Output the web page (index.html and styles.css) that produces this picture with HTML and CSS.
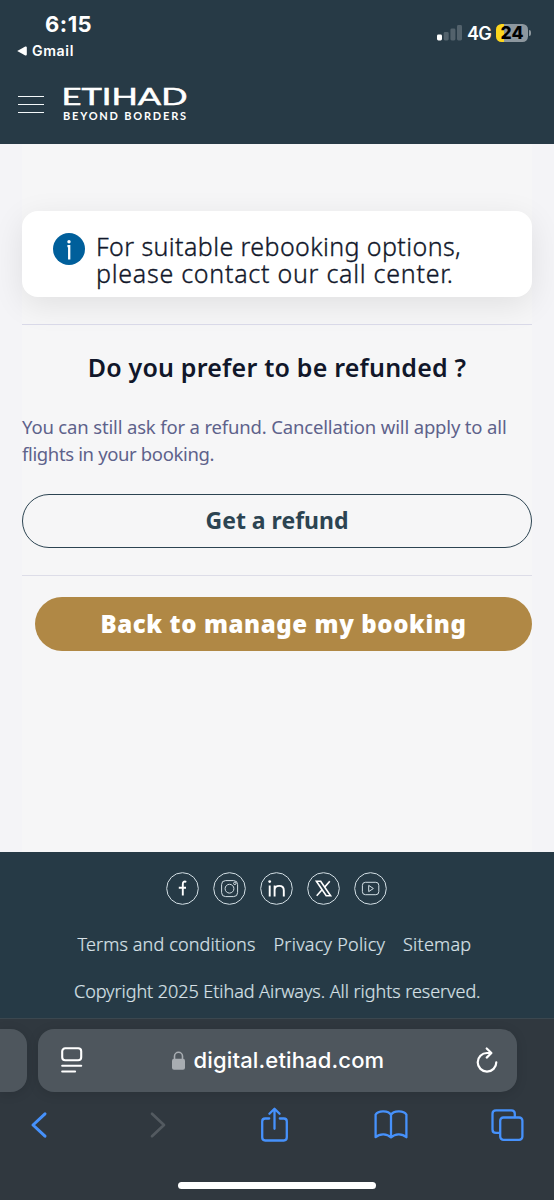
FILE: index.html
```html
<!DOCTYPE html>
<html lang="en">
<head>
<meta charset="utf-8">
<title>Etihad – Manage booking</title>
<link rel="stylesheet" href="styles.css">
</head>
<body>
<div class="screen">
  <header class="top">
    <div class="status">
      <div class="status-left">
        <div class="clock">6:15</div>
        <div class="back-app">
          <svg width="10" height="10" viewBox="0 0 10 10"><path d="M0.2 5 8.3 0.5Q9.8 0.1 9.8 1.4V8.6Q9.8 9.9 8.3 9.5Z" fill="#fff"/></svg>
          <span>Gmail</span>
        </div>
      </div>
      <div class="status-right">
        <svg width="25" height="16" viewBox="0 0 25 16"><rect x="0" y="9.5" width="5" height="6" rx="1.4" fill="#fff"/><g fill="#53626c"><rect x="6.7" y="7" width="5" height="8.5" rx="1.4"/><rect x="13.4" y="3.5" width="5" height="12" rx="1.4"/><rect x="20" y="0" width="5" height="15.5" rx="1.4"/></g></svg>
        <span class="network">4G</span>
        <span class="battery">24</span><span class="battery-tip"></span>
      </div>
    </div>
    <div class="brand-bar">
      <div class="menu"><i></i><i></i><i></i></div>
      <div class="logo">
        <svg width="126" height="20" viewBox="0 0 126 20"><text class="wordmark" x="-1.5" y="18" textLength="126" lengthAdjust="spacingAndGlyphs">ETIHAD</text></svg>
        <div class="tagline">BEYOND BORDERS</div>
      </div>
    </div>
  </header>

  <main class="page">
    <div class="content">
      <section class="notice">
        <svg class="info" width="32" height="32" viewBox="0 0 32 32"><circle cx="16" cy="16" r="16" fill="#005f9b"/><circle cx="16" cy="8.8" r="1.7" fill="#fff"/><path d="M14.4 13.2H16.2V26.6" fill="none" stroke="#fff" stroke-width="2.3"/></svg>
        <div class="notice-text"><p class="n1">For suitable rebooking options,</p><p class="n2">please contact our call center.</p></div>
      </section>
      <section class="refund">
        <h1>Do you prefer to be refunded ?</h1>
        <div class="hint"><p class="hint-a">You can still ask for a refund. Cancellation will apply to all</p><p class="hint-b">flights in your booking.</p></div>
        <button class="btn outline">Get a refund</button>
      </section>
      <button class="btn solid">Back to manage my booking</button>
    </div>
  </main>

  <footer class="footer">
    <div class="social">
      <svg viewBox="0 0 33 33"><circle cx="16.5" cy="16.5" r="15.8"/><path class="bold" d="M20.3 9.8Q16.8 8.8 16.8 12.2V23.5M12.8 15.8H20"/></svg>
      <svg viewBox="0 0 33 33"><circle cx="16.5" cy="16.5" r="15.8"/><rect x="8.6" y="8.6" width="16" height="16" rx="4"/><circle cx="16.5" cy="16.7" r="4.4"/><circle cx="21.8" cy="11.4" r="1.2"/></svg>
      <svg viewBox="0 0 33 33"><circle cx="16.5" cy="16.5" r="15.8"/><path class="bold" d="M9.7 13.4V24.4M14.6 24.4V13.4M14.6 18Q14.8 13.9 19.2 13.9 23.8 13.9 23.8 18.4V24.4"/><circle class="dot" cx="9.7" cy="9.6" r="1.4"/></svg>
      <svg viewBox="0 0 33 33"><circle cx="16.5" cy="16.5" r="15.8"/><path class="xmark" d="M9.4 9.2H13.7L23.6 23.7H19.2ZM22.8 9.2 17.2 15.6M9.7 23.7 15.5 17.2"/></svg>
      <svg viewBox="0 0 33 33"><circle cx="16.5" cy="16.5" r="15.8"/><rect x="8.4" y="10.3" width="16.4" height="12.4" rx="3"/><path d="M14.7 13.4 19.4 16.5 14.7 19.6Z"/></svg>
    </div>
    <nav class="links"><a class="l1">Terms and conditions</a><a class="l2">Privacy Policy</a><a class="l3">Sitemap</a></nav>
    <div class="copyright">Copyright 2025 Etihad Airways. All rights reserved.</div>
  </footer>

  <div class="browser">
    <div class="tabs">
      <div class="tab-edge"></div>
      <div class="address">
        <svg width="22" height="26" viewBox="0 0 22 26" fill="none" stroke="#fff" stroke-width="2.1" stroke-linecap="round"><rect x="1.2" y="1.3" width="19" height="12" rx="3"/><path d="M1.2 18.7H20.2M1.2 24.5H14.1"/></svg>
        <div class="host">
          <svg width="13" height="19" viewBox="0 0 13 19"><path d="M2.5 8.5V5.3a4 4 0 0 1 8 0V8.5" fill="none" stroke="#a8adb2" stroke-width="1.6"/><rect width="13" height="11" y="7.7" rx="2" fill="#a8adb2"/></svg>
          <span>digital.etihad.com</span>
        </div>
        <svg width="22" height="27" viewBox="0 0 22 27" fill="none" stroke="#fff" stroke-width="2.2" stroke-linecap="round" stroke-linejoin="round"><path d="M14.6 6H11A9.3 9.3 0 1 0 20.3 15.3M10.7 1.5 15.4 6 10.7 10.6"/></svg>
      </div>
    </div>
    <div class="tools">
      <svg width="16" height="26" viewBox="0 0 16 26" stroke="#4691fb" stroke-width="3"><path d="M14 1.8 2 13 14 24.2"/></svg>
      <svg class="forward" width="16" height="26" viewBox="0 0 16 26" stroke="#535a60" stroke-width="2.7"><path d="M2 1.8 14 13 2 24.2"/></svg>
      <svg class="share" width="27" height="34" viewBox="0 0 27 34" stroke="#4691fb" stroke-width="2.3"><path d="M8.2 11.5H4.2Q1.2 11.5 1.2 14.5V30.3Q1.2 33.5 4.2 33.5H22.8Q25.8 33.5 25.8 30.3V14.5Q25.8 11.5 22.8 11.5H18.8M13.5 21.8V1.8M8.4 6.8 13.5 1.7 18.6 6.8"/></svg>
      <svg class="book" width="34" height="29" viewBox="0 0 34 29" stroke="#4691fb" stroke-width="2.3"><path d="M17 4.8C14.5 0.6 4.5 0.1 1.6 4.6V27.2C6 23.2 13 23.6 17 27.4 21 23.6 28 23.2 32.4 27.2V4.6C29.5 0.1 19.5 0.6 17 4.8ZM17 4.8V27"/></svg>
      <svg class="windows" width="33" height="32" viewBox="0 0 33 32" stroke="#4691fb" stroke-width="2.3"><rect x="9.2" y="8.5" width="22.2" height="22.3" rx="3.2"/><path d="M8.7 23.9H5Q1.5 23.9 1.5 20.4V4.8Q1.5 1.3 5 1.3H20.3Q23.8 1.3 23.8 4.8V8"/></svg>
    </div>
    <div class="home-bar"></div>
  </div>
</div>
</body>
</html>
```
FILE: styles.css
```css
* { box-sizing: border-box; }
body { margin: 0; font-family: "Noto Sans", sans-serif; }
p { margin: 0; }
svg { display: block; flex: none; overflow: visible; }
.screen { width: 554px; height: 1200px; display: flex; flex-direction: column; overflow: hidden; white-space: nowrap; }

.top { height: 144px; background: #273a46; color: #fff; }
.status { height: 82px; display: flex; justify-content: space-between; font-family: Inter, sans-serif; }
.status-left { padding-left: 17px; }
.clock { padding: 12px 0 0 28px; font-size: 22px; line-height: 25px; font-weight: 700; letter-spacing: 0.5px; }
.back-app { display: flex; align-items: center; gap: 5px; height: 27px; font-size: 14.2px; font-weight: 600; letter-spacing: 0.6px; }
.status-right { display: flex; align-items: center; height: 66px; padding-right: 23px; }
.network { margin-left: 5px; width: 29px; font-size: 18px; font-weight: 600; letter-spacing: -0.7px; }
.battery { width: 32px; height: 18px; border-radius: 5.5px; background: linear-gradient(90deg, #fdd61d 8px, #8d979e 8px); color: #000; font-size: 17.5px; line-height: 18px; font-weight: 800; text-align: center; }
.battery-tip { width: 2px; height: 6px; margin-left: 1px; border-radius: 0 3px 3px 0; background: #8d979e; }
.brand-bar { display: flex; padding-left: 18px; }
.menu { width: 26px; padding-top: 13.5px; display: grid; gap: 7px; align-content: start; }
.menu i { height: 1.2px; background: #f4f8fa; }
.logo { margin-left: 19px; padding-top: 4.5px; }
.wordmark { font-family: Lato, sans-serif; font-size: 22.5px; font-weight: 400; fill: #fff; stroke: #fff; stroke-width: 0.5px; }
.tagline { margin-top: 3.5px; font-family: Lato, sans-serif; font-size: 11px; line-height: 12px; font-weight: 700; letter-spacing: 1.8px; }

.page { height: 708px; background: #f4f4f7; padding: 0 22px; }
.content { height: 100%; padding-top: 67px; background: #f6f6f7; display: flex; flex-direction: column; }
.notice { height: 86px; border-radius: 16px; background: #fff; box-shadow: 0 8px 32px rgba(0,0,0,.09); display: flex; padding: 21.5px 0 0 31px; color: #11172a; }
.notice-text { margin: 0 0 0 11px; font-size: 25px; line-height: 27px; font-weight: 300; -webkit-text-stroke: 0.35px #11172a; }
.n1 { letter-spacing: 0.41px; }
.n2 { letter-spacing: 0.74px; }
.refund { margin-top: 27px; height: 252px; border-top: 1px solid #d9d9e8; border-bottom: 1px solid #dddde8; display: flex; flex-direction: column; }
h1 { margin: 24px 0 0; color: #11172a; font-size: 25px; line-height: 36px; font-weight: 600; text-align: center; letter-spacing: 0.2px; }
.hint { margin: 28px 0 0; color: #5e628b; font-size: 18.5px; line-height: 27px; }
.hint-a { letter-spacing: -0.16px; }
.hint-b { letter-spacing: -0.36px; }
.btn { font-family: "Noto Sans", sans-serif; font-size: 23px; padding: 0 0 2px; border-radius: 27px; height: 54px; }
.outline { margin-top: 27px; flex: none; border: 1.5px solid #2c4452; background: transparent; color: #2c4452; font-weight: 700; }
.solid { margin: 21px 0 0 13px; border: 0; background: #b08845; color: #fff; font-size: 24px; font-weight: 900; letter-spacing: 0.6px; }

.footer { height: 166px; background: #263a46; color: #d6e0e6; font-weight: 300; }
.social { display: flex; justify-content: center; gap: 14px; padding: 20px 2px 0 0; }
.social svg { width: 33px; height: 33px; fill: none; stroke: #d3dfe5; stroke-width: 1; }
.social .bold { stroke: #fff; stroke-width: 1.9; }
.social .dot { fill: #fff; stroke: none; }
.social .xmark { stroke: #fff; stroke-width: 1.6; }
.links { display: flex; padding-left: 77.5px; margin-top: 26px; font-size: 18px; line-height: 26px; letter-spacing: 0.13px; -webkit-text-stroke: 0.2px #d6e0e6; }
.l1 { width: 196px; }
.l2 { width: 129.5px; letter-spacing: 0.25px; }
.l3 { letter-spacing: 0.25px; }
.copyright { padding-left: 74px; margin-top: 21px; font-size: 18px; line-height: 26px; letter-spacing: -0.05px; -webkit-text-stroke: 0.2px #d6e0e6; }

.browser { flex: 1; background: #30383f; border-top: 1px solid #3b474f; }
.tabs { display: flex; gap: 11px; padding-top: 9.5px; }
.tab-edge { width: 27px; height: 63px; border-radius: 0 16px 16px 0; background: #4e565d; box-shadow: 0 2px 12px rgba(0,0,0,.12); }
.address { width: 479px; height: 63px; border-radius: 16px; background: #4e565d; box-shadow: 0 2px 12px rgba(0,0,0,.12); display: flex; align-items: center; padding: 0 19px 0 22.5px; }
.host { flex: 1; display: flex; align-items: center; gap: 8.5px; padding-left: 89.5px; color: #fff; font-family: Inter, sans-serif; font-size: 22px; font-weight: 500; letter-spacing: 0.15px; }
.tools { height: 66px; display: flex; align-items: center; padding-left: 31px; fill: none; stroke-linecap: round; stroke-linejoin: round; }
.forward { margin-left: 103px; }
.share { margin: 0 0 2px 94.5px; }
.book { margin-left: 86px; }
.windows { margin: 1px 0 0 83.5px; }
.home-bar { width: 198px; height: 7px; margin: 24.5px auto 0; border-radius: 4px; background: #fff; }
```
